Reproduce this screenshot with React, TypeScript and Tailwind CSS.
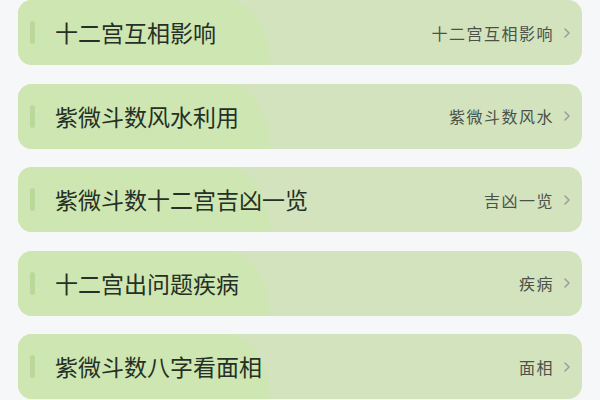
const ITEMS = [
  { title: "十二宫互相影响", tag: "十二宫互相影响" },
  { title: "紫微斗数风水利用", tag: "紫微斗数风水" },
  { title: "紫微斗数十二宫吉凶一览", tag: "吉凶一览" },
  { title: "十二宫出问题疾病", tag: "疾病" },
  { title: "紫微斗数八字看面相", tag: "面相" },
];

const FONT = { fontFamily: '"Noto Sans CJK SC", "Noto Sans", sans-serif' };

function Chevron() {
  return (
    <svg width="8" height="12" viewBox="0 0 8 12" fill="none">
      <path d="M2 2l4 4-4 4" stroke="#9ca09a" strokeWidth="1.6" strokeLinecap="round" strokeLinejoin="round" />
    </svg>
  );
}

function Row({ title, tag }: { title: string; tag: string }) {
  return (
    <div className="relative flex h-[65px] shrink-0 items-center overflow-hidden rounded-[14px] bg-[#d3e3bd]">
      {/* lighter blob on the left */}
      <div className="absolute inset-y-0 left-0 w-[252px] rounded-tr-[45px_100%] bg-[#cee6b1]" />
      <div className="relative ml-[12px] h-[23px] w-[5px] rounded-full bg-[#bbd89b]" />
      <span className="relative ml-[20px] flex-1 text-[23px] leading-none text-[#263026]" style={FONT}>
        {title}
      </span>
      <span className="relative text-[16px] tracking-[1.5px] leading-none text-[#4b5249]" style={FONT}>
        {tag}
      </span>
      <span className="relative ml-[9px] mr-[11px] flex items-center">
        <Chevron />
      </span>
    </div>
  );
}

export default function App() {
  return (
    <div className="h-[400px] w-[600px] overflow-hidden bg-[#f6f7f9]">
      <div className="flex flex-col gap-[18.5px] px-[18px]">
        {ITEMS.map((it) => (
          <Row key={it.title} {...it} />
        ))}
      </div>
    </div>
  );
}
